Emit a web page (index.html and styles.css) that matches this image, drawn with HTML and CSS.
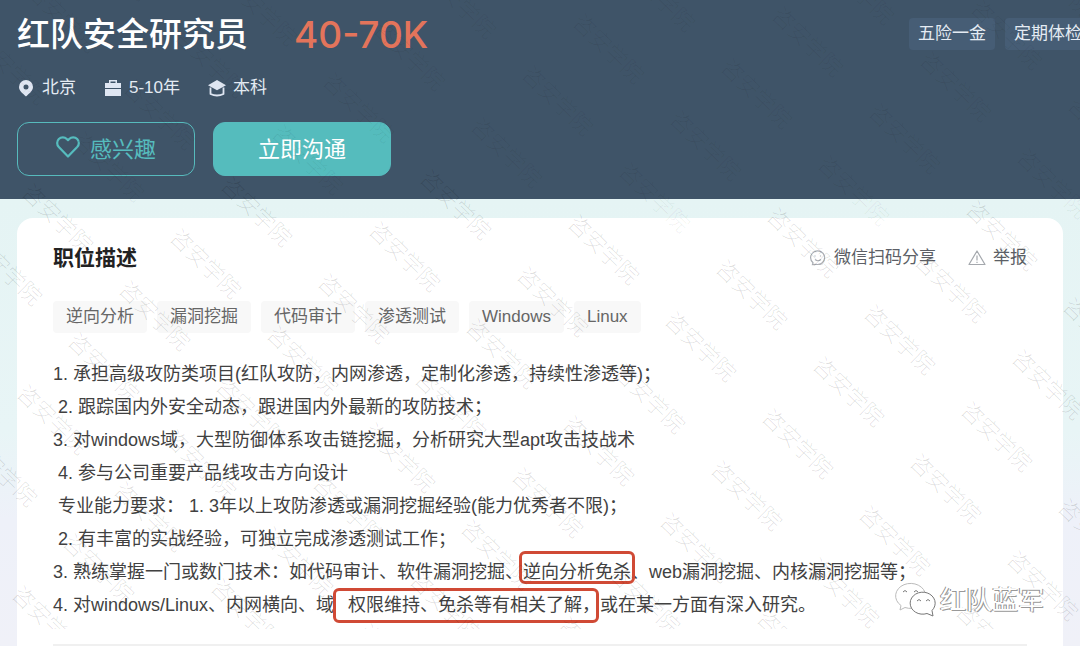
FILE: index.html
```html
<!DOCTYPE html>
<html lang="zh-CN">
<head>
  <meta charset="UTF-8" />
  <title>红队安全研究员</title>
  <meta name="viewport" content="width=device-width, initial-scale=1.0" />
  <link rel="stylesheet" href="styles.css">
</head>
<body>

<header class="job-header">
  <div class="title-row">
    <h1>红队安全研究员</h1>
    <span class="salary">40-70K</span>
    <div class="benefits">
      <span>五险一金</span>
      <span>定期体检</span>
    </div>
  </div>

  <div class="meta">
    <span>
      <svg width="18" height="18" viewBox="0 0 18 18"><path fill="#dfe6f2" fill-rule="evenodd" d="M9 1a7 7 0 0 0-7 7c0 4 4 6.500 7 9.500 3-3 7-5.500 7-9.500a7 7 0 0 0-7-7zm0 4.500a2.500 2.500 0 1 1 0 5 2.500 2.500 0 0 1 0-5z"/></svg>
      北京
    </span>
    <span>
      <svg width="18" height="18" viewBox="0 0 18 18"><path fill="#dfe6f2" fill-rule="evenodd" d="M5 4V1h8v3h4v5H1V4zm1.500-1.500V4h5V2.500zM1 10h16v7H1z"/></svg>
      5-10年
    </span>
    <span>
      <svg width="18" height="18" viewBox="0 0 18 18"><path fill="#dfe6f2" d="M9 1 0 6.200l9 5 9-5z"/><path fill="none" stroke="#dfe6f2" stroke-width="1.800" stroke-linejoin="round" d="M2.500 8.500v6.500q6.500 3 13 0V8.500"/></svg>
      本科
    </span>
  </div>

  <div class="actions">
    <button class="btn btn-like" type="button">
      <svg width="24" height="24" viewBox="0 0 24 24"><path fill="none" stroke="#56bcbe" stroke-width="2.200" stroke-linejoin="round" d="M12 21.500 2.800 12A5.700 5.700 0 0 1 2.800 4a5.600 5.600 0 0 1 8 0L12 5.200 13.200 4a5.600 5.600 0 0 1 8 0 5.700 5.700 0 0 1 0 8z"/></svg>
      感兴趣
    </button>
    <button class="btn btn-chat" type="button">立即沟通</button>
  </div>
</header>

<main class="card">
  <div class="card-head">
    <h2>职位描述</h2>
    <div class="links">
      <a href="#share">
        <svg width="18" height="18" viewBox="0 0 18 18" fill="none" stroke="#aaaeb4" stroke-width="1.200"><path d="M3.500 15.500 4 13.800A7 6.800 0 1 1 7 15.300z"/><path d="M6 6.500v1M11.500 6.500v1M6 10.500q3 2.500 6 0"/></svg>
        微信扫码分享
      </a>
      <a href="#report">
        <svg width="18" height="18" viewBox="0 0 18 18" fill="none" stroke="#a4a8ad" stroke-width="1.200" stroke-linejoin="round"><path d="M9 2 17 15.500H1zM9 6.500v5M9 12.800v1.200"/></svg>
        举报
      </a>
    </div>
  </div>

  <div class="tags">
    <span>逆向分析</span>
    <span>漏洞挖掘</span>
    <span>代码审计</span>
    <span>渗透测试</span>
    <span>Windows</span>
    <span>Linux</span>
  </div>

  <div class="desc">1. 承担高级攻防类项目(红队攻防，内网渗透，定制化渗透，持续性渗透等)；
 2. 跟踪国内外安全动态，跟进国内外最新的攻防技术；
3. 对windows域，大型防御体系攻击链挖掘，分析研究大型apt攻击技战术
 4. 参与公司重要产品线攻击方向设计
 专业能力要求： 1. 3年以上攻防渗透或漏洞挖掘经验(能力优秀者不限)；
 2. 有丰富的实战经验，可独立完成渗透测试工作；
3. 熟练掌握一门或数门技术：如代码审计、软件漏洞挖掘、<span class="mark">逆向分析免杀</span>、web漏洞挖掘、内核漏洞挖掘等；
4. 对windows/Linux、内网横向、域<span class="mark mark-wide">权限维持、免杀等有相关了解，</span>或在某一方面有深入研究。</div>
</main>

<svg class="watermark" id="watermark" aria-hidden="true"></svg>

<div class="account">
  <svg width="42" height="36" viewBox="0 0 42 36" fill="#fff" stroke="#777" stroke-width="1">
    <path d="M6 23.500 5 28l5-2.500A15 12.500 0 1 0 6 23.500z" stroke="#bbb"/>
    <path d="M8 10q2-3 4 0M19 10q2-3 4 0" fill="none"/>
    <path d="M37 28.500A12.500 11 0 1 0 32 31.500l6 2.500z"/>
    <path d="M22 19q2-3 4 0M31 19q2-3 4 0" fill="none"/>
  </svg>
  红队蓝军
</div>

<script>
const svg = document.getElementById("watermark");
const cols = Math.ceil(window.innerWidth / 199);

// diagonal grid: every row steps down and to the left
for (let j = -6; j < 12; j++) {
  for (let i = -5; i < cols + 4; i++) {
    const x = 174 + i * 199 - j * 51;
    const y = 233 - i * 7 + j * 52;
    if (x < -90 || x > window.innerWidth || y < -90 || y > 640) continue;
    const t = document.createElementNS("http://www.w3.org/2000/svg", "text");
    t.setAttribute("transform", `translate(${x} ${y}) rotate(44)`);
    t.setAttribute("dy", "8");
    // fainter over the dark header
    if (y < 170) t.setAttribute("class", "faint");
    t.textContent = "咨安学院";
    svg.appendChild(t);
  }
}
</script>

</body>
</html>
```
FILE: styles.css
```css
html, body {
  margin: 0;
  padding: 0;
}

body {
  display: flex;
  flex-direction: column;
  min-height: 100vh;
  position: relative;
  overflow-x: hidden;
  font-family: "Liberation Sans", "Noto Sans CJK SC", sans-serif;
  background: linear-gradient(#e5f4f4 200px, #e8f5f6 430px, #eef1f9 520px, #f0f1f8);
  color: #414141;
}

h1, h2 {
  margin: 0;
}

.job-header {
  background: #3f5468;
  padding: 9px 17px 23px;
  overflow: hidden;
  color: #fff;
}

.title-row {
  display: flex;
  align-items: center;
  height: 50px;
}

h1 {
  padding-bottom: 4px;
  font-size: 33px;
  font-weight: 500;
}

.salary {
  margin-left: 46px;
  font: 500 37px Inter, sans-serif;
  color: #e3745b;
}

.benefits {
  display: flex;
  gap: 10px;
  margin-left: auto;
  margin-right: -28px; /* runs past the window edge */
}

.benefits span {
  padding: 0 9px;
  line-height: 32px;
  font-size: 17px;
  border-radius: 4px;
  background: #465d75;
  color: #e4ebf3;
  white-space: nowrap;
}

.meta {
  display: flex;
  gap: 28px;
  margin-top: 17px;
  line-height: 24px;
  font-size: 17px;
  color: #e4ebf3;
}

.meta span {
  display: flex;
  align-items: center;
  gap: 7px;
}

.actions {
  display: flex;
  gap: 18px;
  margin-top: 22px;
}

.btn {
  display: flex;
  align-items: center;
  justify-content: center;
  gap: 10px;
  width: 178px;
  height: 54px;
  padding: 0 0 5px;
  border: 1px solid #57bbbd;
  border-radius: 12px;
  font: 22px "Liberation Sans", "Noto Sans CJK SC", sans-serif;
  cursor: pointer;
}

.btn-like {
  background: transparent;
  color: #56bcbe;
}

.btn-chat {
  background: #55bcbd;
  color: #fff;
}

.card {
  flex: 1;
  margin: 19px 17px 0;
  padding: 24px 36px 0;
  border-radius: 16px 16px 0 0;
  background: #fff;
}

.card-head {
  display: flex;
  justify-content: space-between;
  align-items: center;
  line-height: 32px;
}

h2 {
  font-size: 21px;
  font-weight: bold;
  color: #222;
}

.links {
  display: flex;
  gap: 32px;
}

.links a {
  display: flex;
  align-items: center;
  gap: 7px;
  font-size: 17px;
  color: #5c5f66;
  text-decoration: none;
}

.tags {
  display: flex;
  gap: 10px;
  margin-top: 27px;
}

.tags span {
  padding: 0 13px;
  line-height: 32px;
  font-size: 17px;
  border-radius: 4px;
  background: #f8f8f8;
  color: #666;
}

.desc {
  margin-top: 25px;
  padding-bottom: 22px;
  border-bottom: 2px solid #f0f0f0;
  font-size: 18px;
  line-height: 33px;
  white-space: pre-wrap;
}

.mark {
  position: relative;
}

/* hand-drawn style frame around the phrase */
.mark::after {
  content: "";
  position: absolute;
  inset: -11px -4px -2px;
  border: 3px solid #d04a35;
  border-radius: 6px;
}

.mark-wide {
  margin-left: 14px;
}

.mark-wide::after {
  inset: -7px 1px -8px -15px;
}

.watermark {
  position: absolute;
  top: 0;
  left: 0;
  width: 100%;
  height: 629px;
  pointer-events: none;
}

.watermark text {
  font-family: "Noto Sans CJK SC", sans-serif;
  font-size: 22px;
  font-weight: 100;
  fill: rgba(0, 0, 0, 0.16);
}

.watermark .faint {
  fill: rgba(0, 0, 0, 0.09);
}

.account {
  position: absolute;
  right: 36px;
  bottom: 28px;
  display: flex;
  align-items: center;
  gap: 3px;
  line-height: 36px;
  font-size: 26px;
  color: #fff;
  text-shadow: -1px 0 0 #888, 1px 1px 0 #999;
}
```
